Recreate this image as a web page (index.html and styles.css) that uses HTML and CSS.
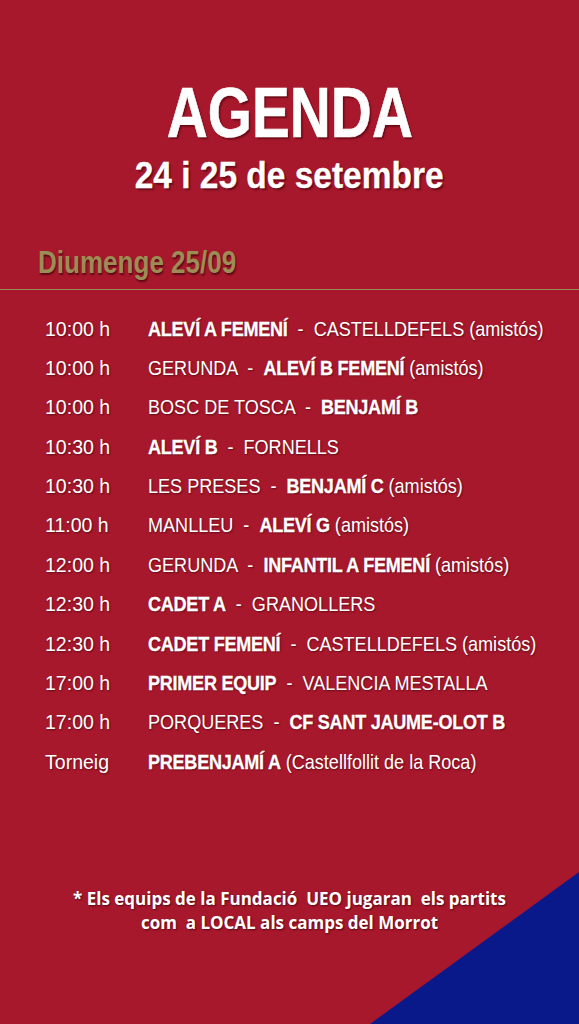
FILE: index.html
```html
<!DOCTYPE html>
<html lang="ca">
<head>
<meta charset="utf-8">
<link rel="stylesheet" href="styles.css">
</head>
<body>
<div class="page">
  <header class="head">
    <h1 class="title"><span class="narrow">AGENDA</span></h1>
    <p class="subtitle"><span class="narrow">24 i 25 de setembre</span></p>
  </header>
  <h2 class="day"><span class="narrow">Diumenge 25/09</span></h2>
  <div class="rule"></div>
  <ul class="list">
    <li class="row"><span class="time">10:00 h</span><span class="match"><b>ALEVÍ A FEMENÍ</b>&nbsp; - &nbsp;CASTELLDEFELS (amistós)</span></li>
    <li class="row"><span class="time">10:00 h</span><span class="match">GERUNDA &nbsp;- &nbsp;<b>ALEVÍ B FEMENÍ</b> (amistós)</span></li>
    <li class="row"><span class="time">10:00 h</span><span class="match">BOSC DE TOSCA &nbsp;- &nbsp;<b>BENJAMÍ B</b></span></li>
    <li class="row"><span class="time">10:30 h</span><span class="match"><b>ALEVÍ B</b> &nbsp;- &nbsp;FORNELLS</span></li>
    <li class="row"><span class="time">10:30 h</span><span class="match">LES PRESES &nbsp;- &nbsp;<b>BENJAMÍ C</b> (amistós)</span></li>
    <li class="row"><span class="time">11:00 h</span><span class="match">MANLLEU &nbsp;- &nbsp;<b>ALEVÍ G</b> (amistós)</span></li>
    <li class="row"><span class="time">12:00 h</span><span class="match">GERUNDA &nbsp;- &nbsp;<b>INFANTIL A FEMENÍ</b> (amistós)</span></li>
    <li class="row"><span class="time">12:30 h</span><span class="match"><b>CADET A</b> &nbsp;- &nbsp;GRANOLLERS</span></li>
    <li class="row"><span class="time">12:30 h</span><span class="match"><b>CADET FEMENÍ</b> &nbsp;- &nbsp;CASTELLDEFELS (amistós)</span></li>
    <li class="row"><span class="time">17:00 h</span><span class="match"><b>PRIMER EQUIP</b> &nbsp;- &nbsp;VALENCIA MESTALLA</span></li>
    <li class="row"><span class="time">17:00 h</span><span class="match">PORQUERES &nbsp;- &nbsp;<b>CF SANT JAUME-OLOT B</b></span></li>
    <li class="row"><span class="time">Torneig</span><span class="match"><b>PREBENJAMÍ A</b> (Castellfollit de la Roca)</span></li>
  </ul>
  <p class="note">* Els equips de la Fundació&nbsp; UEO jugaran&nbsp; els partits<br>com&nbsp; a LOCAL als camps del Morrot</p>
  <div class="corner"></div>
</div>
</body>
</html>
```
FILE: styles.css
```css
* { box-sizing: border-box; }
html, body { margin: 0; padding: 0; }
body { background: #a8182c; }
.page {
  position: relative;
  width: 579px;
  height: 1024px;
  overflow: hidden;
  background: #a8182c;
  color: #fff;
  font-family: "Liberation Sans", Arial, sans-serif;
}
.narrow { display: inline-block; white-space: nowrap; }
.head { text-align: center; padding-top: 77px; }
.title {
  margin: 0;
  font-size: 71px;
  line-height: 71px;
  font-weight: 700;
  -webkit-text-stroke: 0.6px #fff;
  text-shadow: 2px 2px 2px rgba(60, 0, 10, 0.6);
}
.title .narrow { transform: scaleX(0.8); }
.subtitle {
  margin: 8px 0 0;
  font-size: 36px;
  line-height: 40px;
  font-weight: 700;
  -webkit-text-stroke: 0.3px #fff;
  text-shadow: 2px 2px 2px rgba(60, 0, 10, 0.6);
}
.subtitle .narrow { transform: scaleX(0.93); }
.day {
  margin: 49px 0 0 38px;
  font-size: 31px;
  line-height: 36px;
  font-weight: 700;
  color: #9c8c55;
  text-shadow: 1px 2px 2px rgba(60, 0, 10, 0.7);
}
.day .narrow { transform: scaleX(0.84); transform-origin: left center; }
.rule { height: 1px; background: #9c8c55; margin-top: 8px; }
.list { list-style: none; margin: 0; padding: 19px 0 0 45px; }
.row {
  display: flex;
  height: 39.36px;
  align-items: center;
  font-size: 21px;
  text-shadow: 1px 1px 2px rgba(50, 0, 10, 0.6);
}
.time {
  width: 103px;
  flex: none;
  display: inline-block;
  white-space: nowrap;
  transform: scaleX(0.93);
  transform-origin: left center;
}
.match {
  flex: none;
  display: inline-block;
  white-space: nowrap;
  transform: scaleX(0.86);
  transform-origin: left center;
}
.match b {
  font-weight: 700;
  letter-spacing: -0.3px;
  -webkit-text-stroke: 0.3px #fff;
}
.note {
  position: absolute;
  left: 0;
  right: 0;
  top: 887px;
  margin: 0;
  z-index: 1;
  text-align: center;
  font-family: "Open Sans", Lato, sans-serif;
  font-weight: 700;
  font-size: 17px;
  line-height: 24px;
  text-shadow: 1px 1px 2px rgba(50, 0, 10, 0.7);
}
.corner {
  position: absolute;
  right: 0;
  bottom: 0;
  width: 209px;
  height: 152px;
  background: #0a198a;
  clip-path: polygon(100% 0, 100% 100%, 0 100%);
}
```
